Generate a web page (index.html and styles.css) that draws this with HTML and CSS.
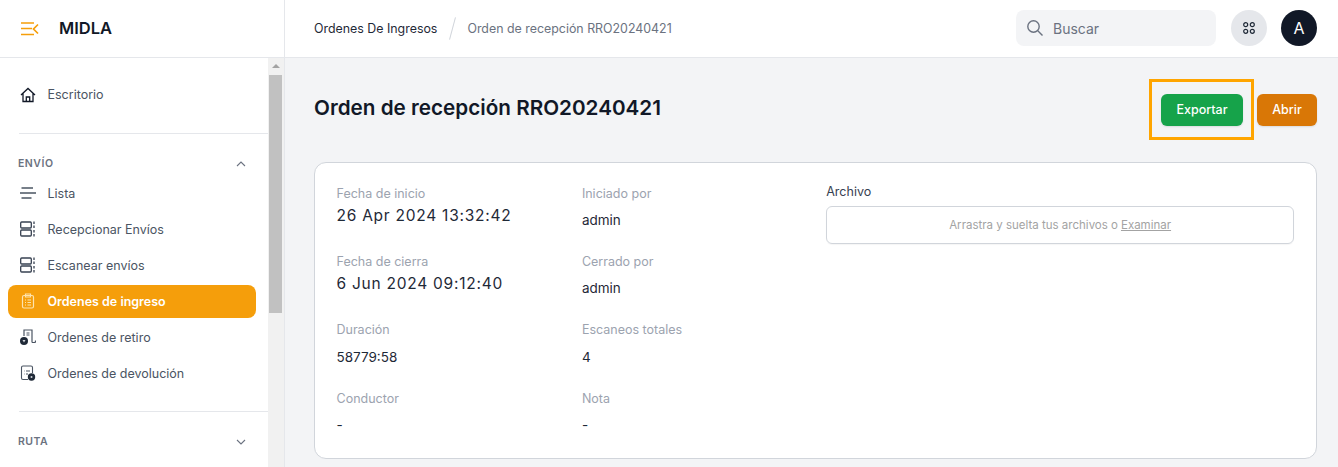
FILE: index.html
```html
<!DOCTYPE html>
<html lang="es">
<head>
    <meta charset="UTF-8">
    <title>Orden de recepción RRO20240421</title>
    <link rel="stylesheet" href="styles.css">
</head>
<body>
    <div class="app">
        <aside class="sidebar">
            <div class="brand">
                <svg class="brand-icon" width="18" height="14" viewBox="0 0 18 14" fill="none" stroke="#f59e0b" stroke-width="1.7">
                    <path d="M0 1H13M0 6.5H11M0 12.5H13M17 2.5L12.5 7L17 11.5"/>
                </svg>
                <span class="brand-name">MIDLA</span>
            </div>
            <div class="side-scroll">
                <nav class="nav">
                    <div class="nav-block">
                        <a class="nav-item">
                            <svg class="nav-icon" viewBox="0 0 16 16" fill="none" stroke="#111827" stroke-width="1.3"><path d="M1 8L8 1.5L15 8M3 6.5V14.5H13V6.5M6.3 14.5V10H9.7V14.5"/></svg>
                            Escritorio
                        </a>
                    </div>
                    <div class="nav-block">
                        <div class="nav-title">ENVÍO
                            <svg width="10" height="6" viewBox="0 0 10 6" fill="none" stroke="#6b7280" stroke-width="1.1"><path d="M1 5L5 1L9 5"/></svg>
                        </div>
                        <a class="nav-item">
                            <svg class="nav-icon" viewBox="0 0 16 16" fill="none" stroke="#4b5563" stroke-width="1.3"><path d="M1.5 3H13M0 8H16M1.5 13H11.5"/></svg>
                            Lista
                        </a>
                        <a class="nav-item">
                            <svg class="nav-icon" viewBox="0 0 16 16" fill="none" stroke="#374151" stroke-width="1.3"><rect x="0.7" y="1" width="10.6" height="6" rx="1"/><rect x="0.7" y="9" width="10.6" height="6" rx="1"/><path d="M14 0.5V3M14 4.5V7M14 9V11.5M14 13V15.5"/></svg>
                            Recepcionar Envíos
                        </a>
                        <a class="nav-item">
                            <svg class="nav-icon" viewBox="0 0 16 16" fill="none" stroke="#374151" stroke-width="1.3"><rect x="0.7" y="1" width="10.6" height="6" rx="1"/><rect x="0.7" y="9" width="10.6" height="6" rx="1"/><path d="M14 0.5V3M14 4.5V7M14 9V11.5M14 13V15.5"/></svg>
                            Escanear envíos
                        </a>
                        <a class="nav-item active">
                            <svg class="nav-icon" viewBox="0 0 16 16" fill="none" stroke="#fde3ae" stroke-width="1.2"><rect x="2.5" y="2.5" width="11" height="12.5" rx="1.5"/><path d="M5.5 1H10.5V4H5.5ZM5 7H6M7.5 7H11M5 9.5H6M7.5 9.5H11M5 12H6M7.5 12H11"/></svg>
                            Ordenes de ingreso
                        </a>
                        <a class="nav-item">
                            <svg class="nav-icon" viewBox="0 0 16 16" fill="none" stroke="#4b5563" stroke-width="1.2"><path d="M4 7V1H12V13.5M12 13.5H14.5C15.3 13.5 15.5 13 15.5 12V11.5M6.5 4H9.5M6.5 6H9.5"/><circle cx="4" cy="12" r="4" fill="#1f2937" stroke="none"/><path d="M2.5 11H5.5L4 13.5Z" fill="#d1d5db" stroke="none"/></svg>
                            Ordenes de retiro
                        </a>
                        <a class="nav-item">
                            <svg class="nav-icon" viewBox="0 0 16 16" fill="none" stroke="#4b5563" stroke-width="1.1"><path d="M8 14.5H3C2 14.5 1.5 14 1.5 13V2.5C1.5 1.5 2 1 3 1H11C12 1 12.5 1.5 12.5 2.5V8M4 6H4.5M6 6H10M4 9H4.5M6 9H8"/><circle cx="11.5" cy="12" r="3.7" fill="#1f2937" stroke="none"/><circle cx="11.5" cy="12" r="1" fill="#d1d5db" stroke="none"/></svg>
                            Ordenes de devolución
                        </a>
                    </div>
                    <div class="nav-block">
                        <div class="nav-title">RUTA
                            <svg width="10" height="6" viewBox="0 0 10 6" fill="none" stroke="#6b7280" stroke-width="1.1"><path d="M1 1L5 5L9 1"/></svg>
                        </div>
                    </div>
                </nav>
                <div class="scrollbar">
                    <span class="scroll-arrow"></span>
                    <span class="scroll-thumb"></span>
                </div>
            </div>
        </aside>
        <div class="content">
            <header class="topbar">
                <div class="crumbs">
                    <span class="crumb-link">Ordenes De Ingresos</span>
                    <span class="crumb-sep"></span>
                    <span class="crumb-current">Orden de recepción RRO20240421</span>
                </div>
                <div class="top-actions">
                    <div class="search">
                        <svg width="18" height="18" viewBox="0 0 18 18" fill="none" stroke="#6b7280" stroke-width="1.4"><circle cx="7.5" cy="7.5" r="5.7"/><path d="M11.8 11.8L16.5 16.5"/></svg>
                        <span>Buscar</span>
                    </div>
                    <div class="round-btn">
                        <svg width="12" height="12" viewBox="0 0 12 12" fill="none" stroke="#1f2937" stroke-width="1.2"><circle cx="2.7" cy="2.7" r="2"/><circle cx="9.3" cy="2.7" r="2"/><circle cx="2.7" cy="9.3" r="2"/><circle cx="9.3" cy="9.3" r="2"/></svg>
                    </div>
                    <div class="avatar">A</div>
                </div>
            </header>
            <main class="page">
                <div class="page-head">
                    <h1>Orden de recepción RRO20240421</h1>
                    <div class="page-actions">
                        <div class="highlight"><button class="btn btn-green">Exportar</button></div>
                        <button class="btn btn-orange">Abrir</button>
                    </div>
                </div>
                <section class="card">
                    <div class="field">
                        <div class="label">Fecha de inicio</div>
                        <div class="date">26 Apr 2024 13:32:42</div>
                    </div>
                    <div class="field">
                        <div class="label">Iniciado por</div>
                        <div class="value">admin</div>
                    </div>
                    <div class="upload">
                        <div class="upload-label">Archivo</div>
                        <div class="dropzone">Arrastra y suelta tus archivos o <u>Examinar</u></div>
                    </div>
                    <div class="field">
                        <div class="label">Fecha de cierra</div>
                        <div class="date">6 Jun 2024 09:12:40</div>
                    </div>
                    <div class="field">
                        <div class="label">Cerrado por</div>
                        <div class="value">admin</div>
                    </div>
                    <div class="field">
                        <div class="label">Duración</div>
                        <div class="value value-low">58779:58</div>
                    </div>
                    <div class="field">
                        <div class="label">Escaneos totales</div>
                        <div class="value value-low">4</div>
                    </div>
                    <div class="field">
                        <div class="label">Conductor</div>
                        <div class="value">-</div>
                    </div>
                    <div class="field">
                        <div class="label">Nota</div>
                        <div class="value">-</div>
                    </div>
                </section>
            </main>
        </div>
    </div>
</body>
</html>
```

FILE: styles.css
```css
* {
    box-sizing: border-box;
}
html, body {
    margin: 0;
    height: 467px;
    overflow: hidden;
}
body {
    font-family: 'Inter', 'Liberation Sans', sans-serif;
    font-size: 13px;
    color: #111827;
    background-color: #f3f4f6;
}
.app {
    display: flex;
    height: 467px;
}

/* sidebar */
.sidebar {
    width: 285px;
    flex-shrink: 0;
    background: white;
    border-right: 1px solid #e5e7eb;
    display: flex;
    flex-direction: column;
}
.brand {
    height: 58px;
    flex-shrink: 0;
    display: flex;
    align-items: center;
    padding-left: 21px;
    border-bottom: 1px solid #e5e7eb;
}
.brand-name {
    margin: 0 0 2px 20px;
    font-size: 16.5px;
    font-weight: 600;
}
.side-scroll {
    flex: 1;
    display: flex;
    min-height: 0;
}
.nav {
    flex: 1;
    min-width: 0;
    overflow: hidden;
}
.nav-block {
    margin-left: 19px;
    border-bottom: 1px solid #e5e7eb;
    padding: 20.5px 0 21px;
}
.nav-block:last-child {
    border-bottom: none;
}
.nav-title {
    display: flex;
    justify-content: space-between;
    align-items: center;
    height: 18px;
    padding: 1px 23px 0 0;
    margin-bottom: 5px;
    margin-left: -1px;
    font-size: 10.5px;
    line-height: 16px;
    font-weight: 600;
    letter-spacing: 0.5px;
    color: #6b7280;
}
.nav-title svg {
    margin-right: -1px;
}
.nav-item {
    display: flex;
    align-items: center;
    height: 33px;
    margin: 0 12px 3px -11px;
    padding: 0 0 1px 12px;
    border-radius: 8px;
    color: #4b5563;
    font-size: 12.5px;
}
.nav-item:last-child {
    margin-bottom: 0;
}
.nav-icon {
    width: 16px;
    height: 16px;
    margin-right: 11.5px;
    flex-shrink: 0;
}
.nav-item.active {
    background-color: #f59e0b;
    color: white;
    font-weight: 600;
}
.scrollbar {
    width: 16px;
    flex-shrink: 0;
    background-color: #f1f1f1;
    display: flex;
    flex-direction: column;
    align-items: flex-start;
    padding-left: 1px;
}
.scroll-arrow {
    margin: 6px 0 0 3px;
    border-left: 4px solid transparent;
    border-right: 4px solid transparent;
    border-bottom: 4px solid #a3a3a3;
}
.scroll-thumb {
    width: 13px;
    height: 238px;
    margin-top: 7px;
    background-color: #c1c1c1;
}

/* top bar */
.content {
    flex: 1;
    min-width: 0;
}
.topbar {
    height: 58px;
    background: white;
    border-bottom: 1px solid #e5e7eb;
    display: flex;
    align-items: center;
    justify-content: space-between;
    padding: 0 21px 1px 29px;
}
.crumbs {
    display: flex;
    align-items: center;
    font-size: 12.4px;
}
.crumb-link {
    color: #1f2937;
}
.crumb-sep {
    width: 1px;
    height: 23px;
    margin: 0 14.5px;
    background-color: #d1d5db;
    transform: rotate(15deg);
}
.crumb-current {
    color: #6b7280;
}
.top-actions {
    display: flex;
    align-items: center;
    gap: 14px;
}
.search {
    width: 200px;
    height: 36px;
    border-radius: 8px;
    background-color: #f3f4f6;
    display: flex;
    align-items: center;
    gap: 9px;
    padding-left: 10px;
    margin-right: 1px;
    font-size: 14px;
    color: #6b7280;
}
.round-btn, .avatar {
    width: 36px;
    height: 36px;
    border-radius: 50%;
    display: flex;
    align-items: center;
    justify-content: center;
}
.round-btn {
    background-color: #e5e7eb;
}
.avatar {
    background-color: #111827;
    color: white;
    font-size: 16px;
    font-weight: 400;
}

/* page */
.page {
    padding: 21px 21px 0 29px;
}
.page-head {
    display: flex;
    justify-content: space-between;
    align-items: center;
    height: 61px;
    margin-bottom: 22px;
}
h1 {
    margin: 0 0 5px;
    font-size: 20.7px;
    font-weight: 600;
}
.page-actions {
    display: flex;
    align-items: center;
    gap: 3px;
}
.highlight {
    border: 3px solid #ffa500;
    padding: 12px 8px 11px 9px;
}
.btn {
    display: block;
    height: 32px;
    padding: 0 0 1px;
    border: none;
    border-radius: 6px;
    color: white;
    font-family: inherit;
    font-size: 12.5px;
    font-weight: 500;
    box-shadow: 0 1px 2px rgba(0,0,0,0.1);
}
.btn-green {
    width: 82px;
    background-color: #16a34a;
}
.btn-orange {
    width: 60px;
    background-color: #d97706;
}
.card {
    height: 297px;
    background: white;
    border: 1px solid #d1d5db;
    border-radius: 12px;
    padding: 22px 22px 22px 21.5px;
    display: grid;
    grid-template-columns: repeat(4, 1fr);
    grid-template-rows: 68px 68px 69px 50px;
    column-gap: 24px;
    font-size: 12.5px;
}
.label {
    height: 18px;
    line-height: 17px;
    color: #9ca3af;
}
.date {
    font-size: 15.5px;
    letter-spacing: 0.75px;
    line-height: 25px;
    font-weight: 400;
    color: #1f2937;
}
.value {
    margin-top: 7px;
    line-height: 20px;
    font-size: 13.5px;
    color: #1f2937;
}
.value-low {
    margin-top: 8px;
}
.upload {
    grid-column: span 2;
    grid-row: span 4;
    margin: -2px 0 0 -1px;
}
.upload-label {
    line-height: 18px;
    margin-bottom: 5px;
    color: #374151;
}
.dropzone {
    height: 38px;
    border: 1px solid #d1d5db;
    border-radius: 6px;
    display: flex;
    align-items: center;
    justify-content: center;
    gap: 3px;
    color: #a3a3a3;
    font-size: 11.5px;
    box-shadow: 0 1px 1px rgba(0,0,0,0.04);
}
```
